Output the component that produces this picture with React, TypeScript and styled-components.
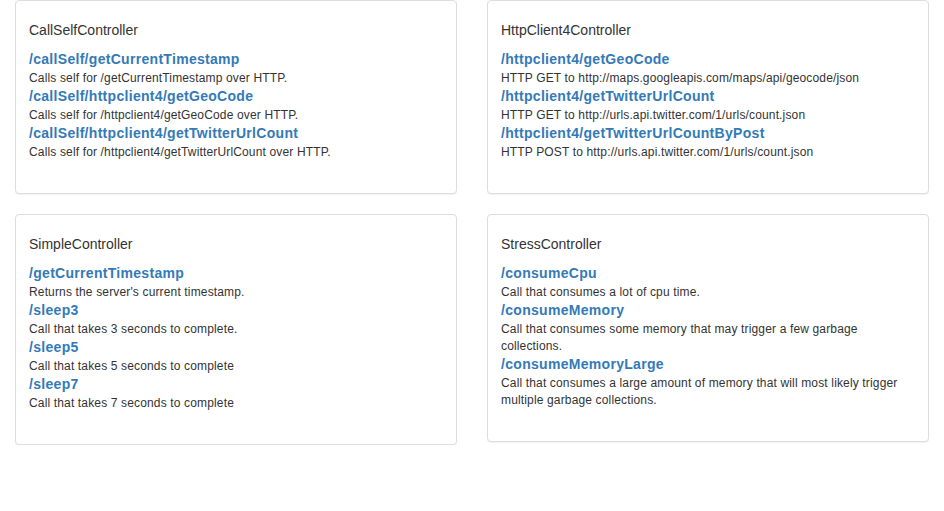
import React from "react";
import styled, { createGlobalStyle } from "styled-components";

const GlobalStyle = createGlobalStyle`
  html, body {
    margin: 0;
    padding: 0;
    background: #ffffff;
  }
  body {
    font-family: "Liberation Sans", Arial, Helvetica, sans-serif;
    font-size: 14px;
    line-height: 20px;
    color: #333333;
  }
`;

const Page = styled.div`
  display: grid;
  grid-template-columns: 1fr 1fr;
  column-gap: 30px;
  row-gap: 20px;
  align-items: start;
  padding: 0 15px;
`;

const Card = styled.section`
  border: 1px solid #dddddd;
  border-radius: 4px;
  background: #ffffff;
  box-shadow: 0 1px 1px rgba(0, 0, 0, 0.05);
  padding: 15px 13px;
`;

const Title = styled.h4`
  margin: 4px 0 10px;
  font-size: 14px;
  line-height: 20px;
  font-weight: 400;
  color: #333333;
`;

const List = styled.dl`
  margin: 0 0 17px;
`;

const Endpoint = styled.dt`
  margin: 0;
  line-height: 18px;
`;

const EndpointLink = styled.a`
  font-size: 14px;
  font-weight: 700;
  letter-spacing: 0.3px;
  color: #337ab7;
  text-decoration: none;
`;

const Description = styled.dd`
  margin: 0;
  padding-top: 2px;
  font-size: 12px;
  line-height: 17px;
  letter-spacing: 0.15px;
  color: #333333;
`;

type Item = { path: string; desc: string };
type Controller = { name: string; items: Item[] };

const controllers: Controller[] = [
  {
    name: "CallSelfController",
    items: [
      {
        path: "/callSelf/getCurrentTimestamp",
        desc: "Calls self for /getCurrentTimestamp over HTTP.",
      },
      {
        path: "/callSelf/httpclient4/getGeoCode",
        desc: "Calls self for /httpclient4/getGeoCode over HTTP.",
      },
      {
        path: "/callSelf/httpclient4/getTwitterUrlCount",
        desc: "Calls self for /httpclient4/getTwitterUrlCount over HTTP.",
      },
    ],
  },
  {
    name: "HttpClient4Controller",
    items: [
      {
        path: "/httpclient4/getGeoCode",
        desc: "HTTP GET to http://maps.googleapis.com/maps/api/geocode/json",
      },
      {
        path: "/httpclient4/getTwitterUrlCount",
        desc: "HTTP GET to http://urls.api.twitter.com/1/urls/count.json",
      },
      {
        path: "/httpclient4/getTwitterUrlCountByPost",
        desc: "HTTP POST to http://urls.api.twitter.com/1/urls/count.json",
      },
    ],
  },
  {
    name: "SimpleController",
    items: [
      {
        path: "/getCurrentTimestamp",
        desc: "Returns the server's current timestamp.",
      },
      { path: "/sleep3", desc: "Call that takes 3 seconds to complete." },
      { path: "/sleep5", desc: "Call that takes 5 seconds to complete" },
      { path: "/sleep7", desc: "Call that takes 7 seconds to complete" },
    ],
  },
  {
    name: "StressController",
    items: [
      { path: "/consumeCpu", desc: "Call that consumes a lot of cpu time." },
      {
        path: "/consumeMemory",
        desc: "Call that consumes some memory that may trigger a few garbage collections.",
      },
      {
        path: "/consumeMemoryLarge",
        desc: "Call that consumes a large amount of memory that will most likely trigger multiple garbage collections.",
      },
    ],
  },
];

export default function App() {
  return (
    <>
      <GlobalStyle />
      <Page>
        {controllers.map((c) => (
          <Card key={c.name}>
            <Title>{c.name}</Title>
            <List>
              {c.items.map((it) => (
                <React.Fragment key={it.path}>
                  <Endpoint>
                    <EndpointLink href="#">{it.path}</EndpointLink>
                  </Endpoint>
                  <Description>{it.desc}</Description>
                </React.Fragment>
              ))}
            </List>
          </Card>
        ))}
      </Page>
    </>
  );
}
